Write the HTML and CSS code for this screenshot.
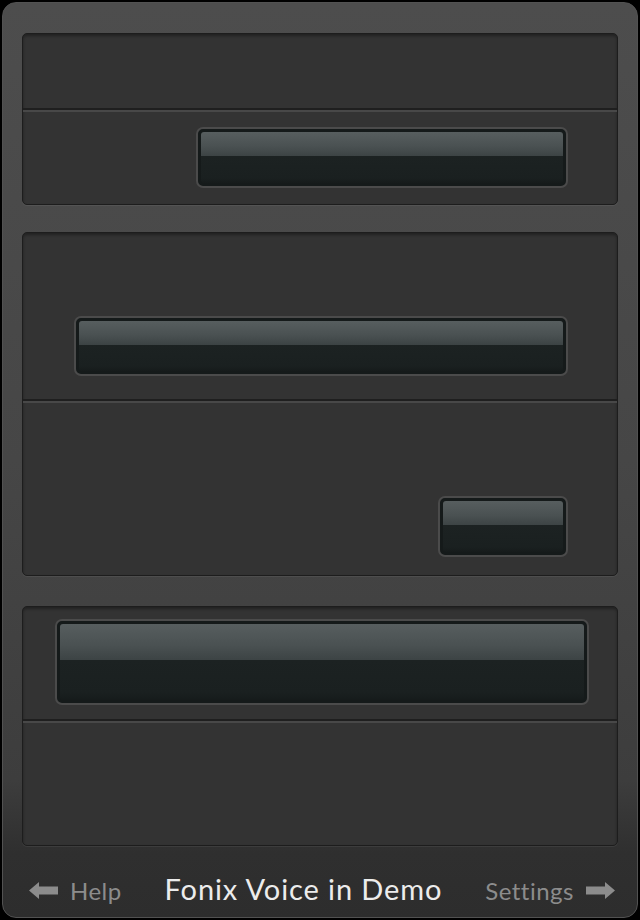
FILE: index.html
```html
<!DOCTYPE html>
<html>
<head>
<meta charset="utf-8">
<link rel="stylesheet" href="styles.css">
</head>
<body>
<div class="frame">
  <div class="panels">
    <section class="panel">
      <div class="row r1a"></div>
      <div class="row r1b"><div class="btn b1"><div class="gloss"></div></div></div>
    </section>
    <section class="panel p2">
      <div class="row r2a"><div class="btn b2"><div class="gloss"></div></div></div>
      <div class="row r2b"><div class="btn b3"><div class="gloss"></div></div></div>
    </section>
    <section class="panel p3">
      <div class="row r3a"><div class="btn b4"><div class="gloss"></div></div></div>
      <div class="row r3b"></div>
    </section>
  </div>
  <footer class="footer">
    <div class="nav nav-left">
      <svg class="arrow" width="29" height="17" viewBox="0 0 29 17"><path d="M0 8.5 L10 0 L10 4.5 L29 4.5 L29 12.5 L10 12.5 L10 17 Z" fill="#8c8c8c"/></svg>
      <span>Help</span>
    </div>
    <div class="title">Fonix Voice in Demo</div>
    <div class="nav nav-right">
      <span>Settings</span>
      <svg class="arrow" width="29" height="17" viewBox="0 0 29 17"><path d="M29 8.5 L19 0 L19 4.5 L0 4.5 L0 12.5 L19 12.5 L19 17 Z" fill="#8c8c8c"/></svg>
    </div>
  </footer>
</div>
</body>
</html>
```
FILE: styles.css
```css
html, body {
  margin: 0;
  padding: 0;
  background: #000;
}
body {
  width: 640px;
  height: 920px;
  overflow: hidden;
}
.frame {
  box-sizing: border-box;
  margin: 2px 0 0 2px;
  width: 636px;
  height: 916px;
  border-radius: 14px;
  border: 1px solid #525252;
  background: linear-gradient(to bottom, #4d4d4d 0%, #464646 50%, #3d3d3d 85%, #2f2f2f 93%, #2d2d2d 100%);
  display: flex;
  flex-direction: column;
  padding: 30px 0 0 19px;
}
.panels {
  display: flex;
  flex-direction: column;
  gap: 27px;
}
.panel {
  box-sizing: border-box;
  width: 596px;
  border: 1px solid #1d1d1d;
  border-radius: 5px;
  background: #333;
  box-shadow: inset 0 2px 3px rgba(0,0,0,0.35), 0 1px 0 rgba(255,255,255,0.06);
  display: flex;
  flex-direction: column;
  overflow: hidden;
}
.p3 { margin-top: 3px; }
.row {
  box-sizing: border-box;
  display: flex;
  justify-content: flex-end;
  align-items: flex-start;
  padding-right: 49px;
}
.row + .row {
  border-top: 2px solid #1f1f1f;
  box-shadow: inset 0 2px 0 #484848;
}
.r1a { height: 74px; }
.r1b { height: 96px; padding-top: 17px; }
.r2a { height: 166px; padding-top: 83px; }
.r2b { height: 176px; padding-top: 95px; }
.r3a { height: 112px; padding-top: 12px; padding-right: 28px; }
.r3b { height: 126px; }
.btn {
  box-sizing: border-box;
  border: 2px solid #4b4b4b;
  border-radius: 7px;
  background: #151a1a;
  padding: 3px;
  display: flex;
  flex-direction: column;
}
.gloss {
  flex: 1;
  border-radius: 3px;
  background: linear-gradient(to bottom, #575e5f 0%, #4a5152 28%, #3c4344 48%, #1c2222 48%, #1a2020 90%, #161b1b 100%);
}
.b1 { width: 372px; height: 61px; }
.b2 { width: 494px; height: 60px; }
.b3 { width: 130px; height: 61px; }
.b4 { width: 534px; height: 86px; }
.footer {
  flex: 1;
  display: flex;
  align-items: center;
  justify-content: space-between;
  padding: 18px 22px 0 7px;
  font-family: Lato, "DejaVu Sans", sans-serif;
}
.nav {
  display: flex;
  align-items: center;
  gap: 12px;
  color: #8c8c8c;
  font-size: 24px;
  letter-spacing: 0.5px;
}
.title {
  color: #ececec;
  font-size: 29px;
  letter-spacing: 0.9px;
  margin-top: -5px;
}
```
